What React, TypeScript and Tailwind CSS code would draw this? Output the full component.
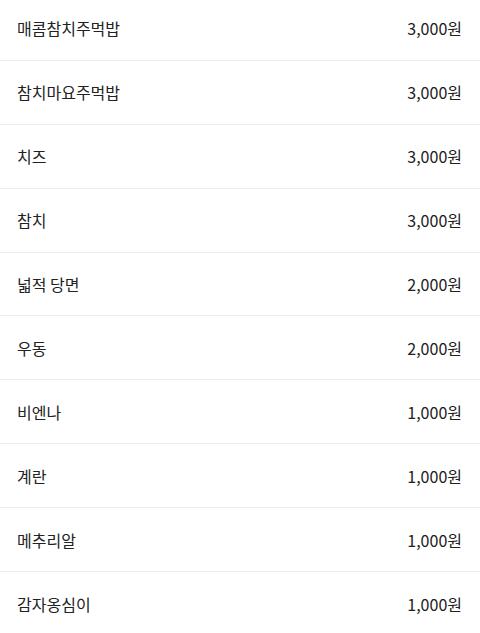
const items: [string, string][] = [
  ["매콤참치주먹밥", "3,000원"],
  ["참치마요주먹밥", "3,000원"],
  ["치즈", "3,000원"],
  ["참치", "3,000원"],
  ["넓적 당면", "2,000원"],
  ["우동", "2,000원"],
  ["비엔나", "1,000원"],
  ["계란", "1,000원"],
  ["메추리알", "1,000원"],
  ["감자옹심이", "1,000원"],
];

export default function App() {
  return (
    <div
      className="w-[480px] h-[633px] overflow-hidden bg-white text-[#222222]"
      style={{ fontFamily: '"Noto Sans CJK KR", "Noto Sans", sans-serif' }}
    >
      <div className="-mt-[3px] flex flex-col">
        {items.map(([name, price], i) => (
          <div
            key={i}
            className={`flex h-[63.9px] items-center justify-between pl-[17px] pr-[18px] ${
              i < items.length - 1 ? "border-b border-[#ececec]" : ""
            }`}
          >
            <span className="text-[16px]">{name}</span>
            <span className="text-[16px]">{price}</span>
          </div>
        ))}
      </div>
    </div>
  );
}
